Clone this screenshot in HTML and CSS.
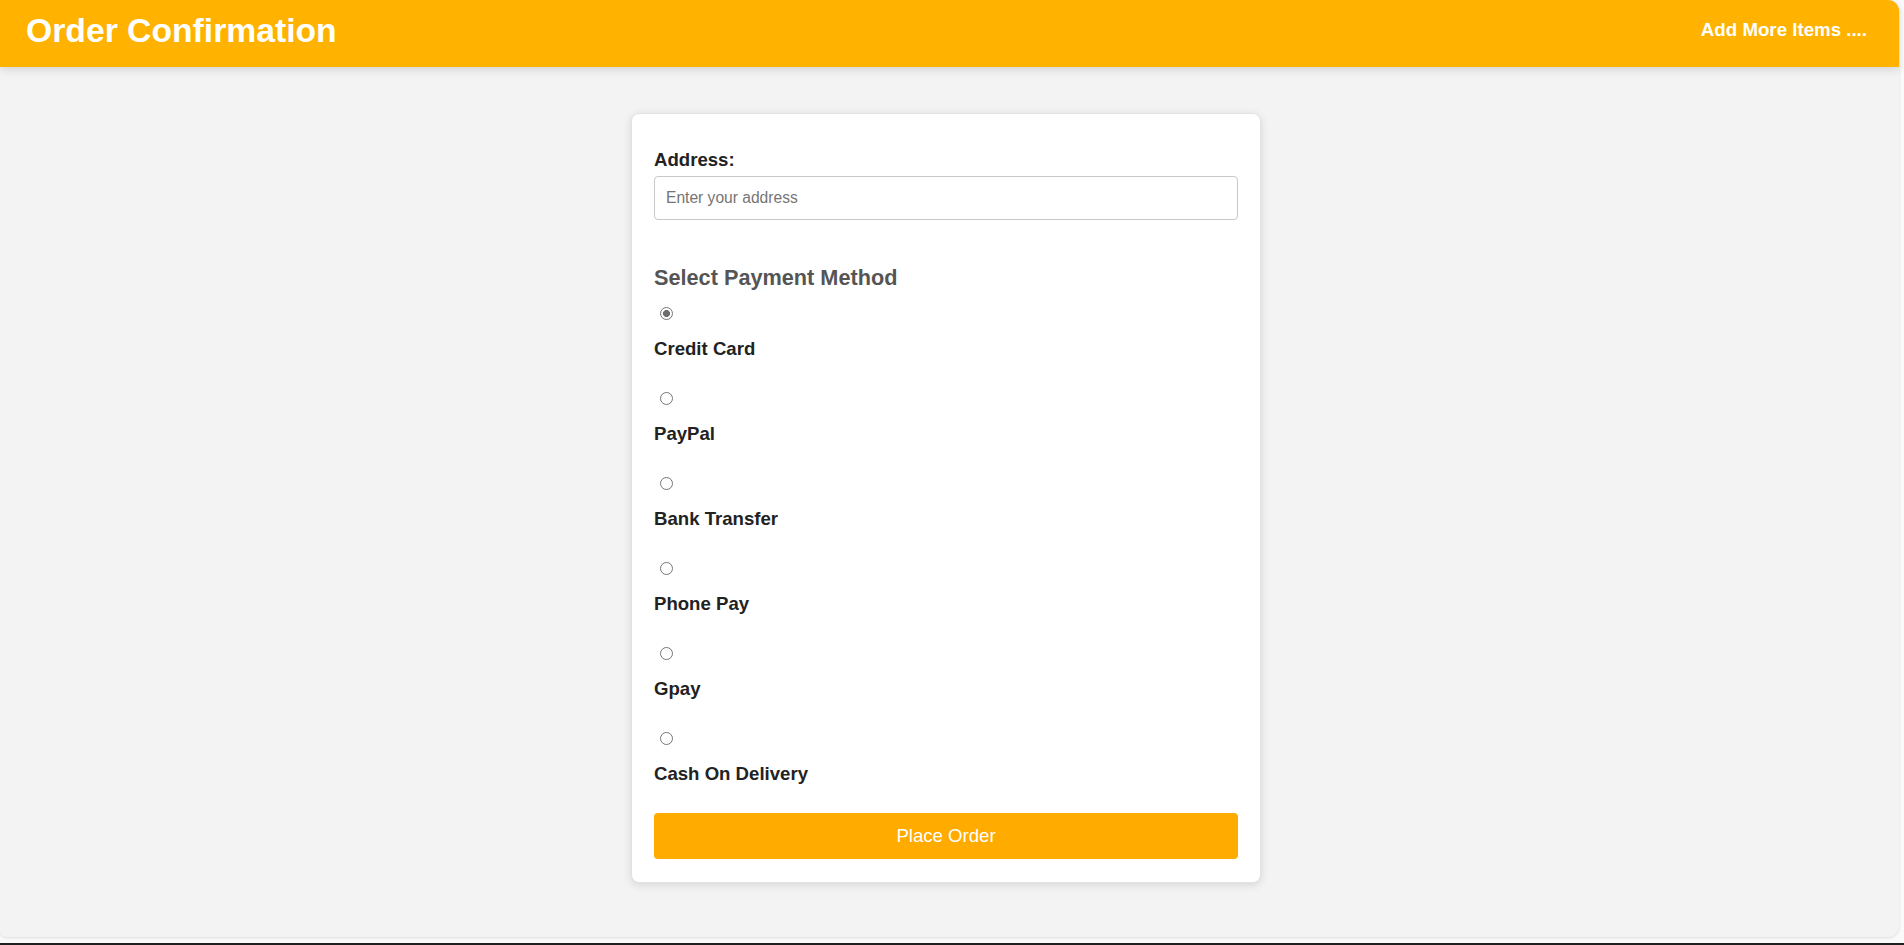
FILE: index.html
```html
<!DOCTYPE html>
<html lang="en">
<head>
<meta charset="utf-8">
<title>Order Confirmation</title>
<link rel="stylesheet" href="styles.css">
</head>
<body>
<div class="app">
  <header class="topbar">
    <h1 class="title">Order Confirmation</h1>
    <a class="nav-link" href="#">Add More Items ....</a>
  </header>
  <main class="main">
    <form class="card">
      <label class="field-label" for="address">Address:</label>
      <input class="text-input" id="address" type="text" placeholder="Enter your address">
      <h2 class="section-title">Select Payment Method</h2>
      <div class="options">
        <div class="option"><input class="radio" type="radio" name="pay" id="p1" checked><label class="option-label" for="p1">Credit Card</label></div>
        <div class="option"><input class="radio" type="radio" name="pay" id="p2"><label class="option-label" for="p2">PayPal</label></div>
        <div class="option"><input class="radio" type="radio" name="pay" id="p3"><label class="option-label" for="p3">Bank Transfer</label></div>
        <div class="option"><input class="radio" type="radio" name="pay" id="p4"><label class="option-label" for="p4">Phone Pay</label></div>
        <div class="option"><input class="radio" type="radio" name="pay" id="p5"><label class="option-label" for="p5">Gpay</label></div>
        <div class="option"><input class="radio" type="radio" name="pay" id="p6"><label class="option-label" for="p6">Cash On Delivery</label></div>
      </div>
      <button class="submit" type="button">Place Order</button>
    </form>
  </main>
</div>
<div class="edge"></div>
</body>
</html>
```
FILE: styles.css
```css
html, body {
  height: 100%;
}
body {
  margin: 0;
  background: #fafafa;
  font-family: "Liberation Sans", Arial, sans-serif;
  display: flex;
  flex-direction: column;
  justify-content: space-between;
  overflow: hidden;
}
.app {
  width: 1899px;
  height: 937px;
  flex: none;
  background: #f3f3f3;
  border-radius: 0 11px 11px 6px;
  box-shadow: 0 1px 3px rgba(0,0,0,0.12);
  display: flex;
  flex-direction: column;
}
.topbar {
  height: 67px;
  flex: none;
  box-sizing: border-box;
  background: #ffb300;
  border-radius: 0 11px 0 0;
  display: flex;
  align-items: center;
  justify-content: space-between;
  padding: 0 32px 7px 26px;
  box-shadow: 0 3px 8px rgba(0,0,0,0.12);
  position: relative;
  z-index: 1;
}
.title {
  margin: 0;
  font-size: 33.7px;
  font-weight: bold;
  color: #fff;
  line-height: 1.15;
}
.nav-link {
  font-size: 18.7px;
  font-weight: bold;
  color: #fff;
  text-decoration: none;
  line-height: 1.15;
}
.main {
  display: flex;
  justify-content: center;
  padding: 46px 7px 0 0;
}
.card {
  width: 630px;
  box-sizing: border-box;
  background: #fff;
  border: 1px solid #e2e2e2;
  border-radius: 8px;
  box-shadow: 0 2px 8px rgba(0,0,0,0.12);
  padding: 35px 22px 23px;
  display: flex;
  flex-direction: column;
}
.field-label {
  font-size: 18.6px;
  font-weight: bold;
  color: #222;
  line-height: 22px;
}
.text-input {
  margin-top: 5px;
  height: 44px;
  box-sizing: border-box;
  border: 1px solid #c8c8c8;
  border-radius: 4px;
  padding: 0 11px;
  font-family: "Liberation Sans", Arial, sans-serif;
  font-size: 15.6px;
  color: #222;
  outline: none;
}
.text-input::placeholder {
  color: #757575;
}
.section-title {
  margin: 45px 0 0;
  font-size: 21.7px;
  font-weight: bold;
  color: #555;
  line-height: 26px;
}
.options {
  display: flex;
  flex-direction: column;
  gap: 32px;
  margin-top: 16px;
}
.option {
  display: flex;
  flex-direction: column;
  align-items: flex-start;
}
.radio {
  appearance: none;
  -webkit-appearance: none;
  width: 13px;
  height: 13px;
  margin: 0 0 0 6px;
  box-sizing: border-box;
  border: 1px solid #767676;
  border-radius: 50%;
  background: #fff;
}
.radio:checked {
  background: radial-gradient(circle, #6e6e6e 0 3.2px, #fff 3.8px);
}
.option-label {
  margin-top: 18px;
  font-size: 18.6px;
  font-weight: bold;
  color: #222;
  line-height: 22px;
}
.submit {
  margin-top: 28px;
  height: 46px;
  border: none;
  border-radius: 4px;
  background: #ffab00;
  color: #fff;
  font-family: "Liberation Sans", Arial, sans-serif;
  font-size: 18.6px;
}
.edge {
  height: 2px;
  flex: none;
  background: #1f1f1f;
}
```
